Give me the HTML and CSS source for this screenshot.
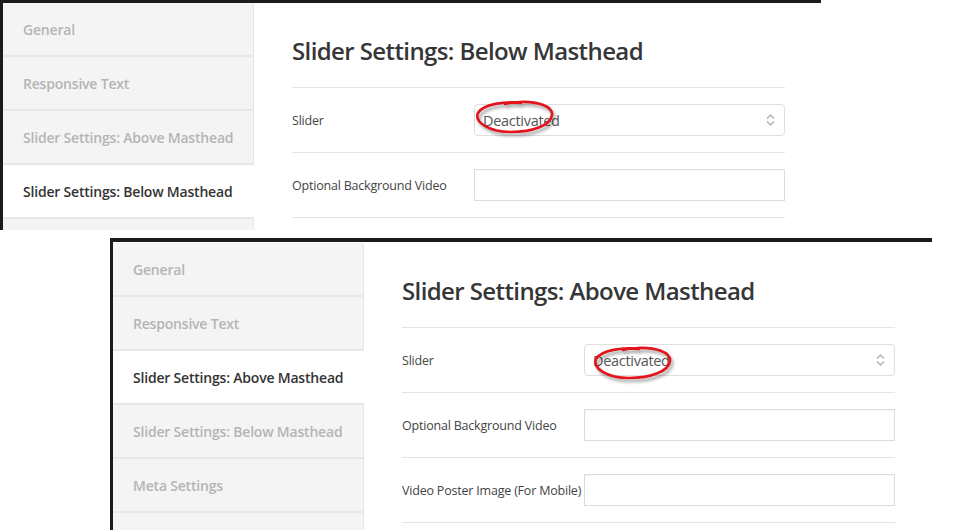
FILE: index.html
```html
<!DOCTYPE html>
<html>
<head>
<meta charset="utf-8">
<link rel="stylesheet" href="styles.css">
</head>
<body>
<div class="shot shot-top">
  <nav class="sidebar">
    <div class="item">General</div>
    <div class="item">Responsive Text</div>
    <div class="item">Slider Settings: Above Masthead</div>
    <div class="item active">Slider Settings: Below Masthead</div>
    <div class="item"></div>
  </nav>
  <main class="main">
    <h2 class="title">Slider Settings: Below Masthead</h2>
    <div class="row">
      <label class="label">Slider</label>
      <div class="select">
        <span class="select-text">Deactivated</span>
        <svg class="arrows" width="9" height="14" viewBox="0 0 9 14"><path d="M1 5.5 L4.5 2 L8 5.5 M1 8.5 L4.5 12 L8 8.5" fill="none" stroke="#b5b5b5" stroke-width="1.5"/></svg>
        <svg class="ring ring-a" width="82" height="38" viewBox="0 0 82 38"><path d="M46 3 C30 1 8 4 3 13 C-1 22 14 32 36 32 C58 32 76 25 77 15 C78 6 62 1 44 2 C38 2 33 3 30 4" fill="none" stroke="#e3141c" stroke-width="2.6" stroke-linecap="round"/></svg>
      </div>
    </div>
    <div class="row">
      <label class="label">Optional Background Video</label>
      <div class="input"></div>
    </div>
  </main>
</div>

<div class="shot shot-bottom">
  <nav class="sidebar">
    <div class="item">General</div>
    <div class="item">Responsive Text</div>
    <div class="item active">Slider Settings: Above Masthead</div>
    <div class="item">Slider Settings: Below Masthead</div>
    <div class="item">Meta Settings</div>
    <div class="item"></div>
  </nav>
  <main class="main">
    <h2 class="title">Slider Settings: Above Masthead</h2>
    <div class="row">
      <label class="label">Slider</label>
      <div class="select">
        <span class="select-text">Deactivated</span>
        <svg class="arrows" width="9" height="14" viewBox="0 0 9 14"><path d="M1 5.5 L4.5 2 L8 5.5 M1 8.5 L4.5 12 L8 8.5" fill="none" stroke="#b5b5b5" stroke-width="1.5"/></svg>
        <svg class="ring ring-b" width="82" height="38" viewBox="0 0 82 38"><path d="M46 3 C30 1 8 4 3 13 C-1 22 14 32 36 32 C58 32 76 25 77 15 C78 6 62 1 44 2 C38 2 33 3 30 4" fill="none" stroke="#e3141c" stroke-width="2.6" stroke-linecap="round"/></svg>
      </div>
    </div>
    <div class="row">
      <label class="label">Optional Background Video</label>
      <div class="input"></div>
    </div>
    <div class="row">
      <label class="label">Video Poster Image (For Mobile)</label>
      <div class="input"></div>
    </div>
  </main>
</div>
</body>
</html>
```
FILE: styles.css
```css
html, body {
  margin: 0;
  padding: 0;
  background: #ffffff;
}
body {
  font-family: "Open Sans", "Noto Sans", sans-serif;
  width: 963px;
  height: 530px;
  overflow: hidden;
}
.shot {
  display: flex;
  align-items: flex-start;
  overflow: hidden;
  background: #ffffff;
  border-top: 3px solid #1b1b1b;
  border-left: 3px solid #1b1b1b;
  box-sizing: border-box;
}
.shot-top {
  width: 821px;
  height: 230px;
}
.shot-bottom {
  width: 822px;
  height: 292px;
  margin-top: 8px;
  margin-left: 110px;
  border-top-width: 4px;
  padding-top: 1px;
}
.sidebar {
  flex: 0 0 250px;
  background: #f4f4f4;
  border-right: 1px solid #e6e6e6;
}
.item {
  height: 52px;
  line-height: 54px;
  padding-left: 20px;
  border-bottom: 2px solid #e8e8e8;
  font-size: 14px;
  font-weight: 600;
  color: #b4b4b4;
  white-space: nowrap;
  letter-spacing: -0.2px;
}
.item.active {
  background: #ffffff;
  color: #333333;
  margin-right: -1px;
}
.main {
  width: 493px;
  margin-left: 38px;
  padding-top: 31px;
}
.title {
  margin: 0;
  font-size: 24px;
  line-height: 34px;
  font-weight: 600;
  color: #363636;
  letter-spacing: -0.6px;
  padding-bottom: 19px;
  border-bottom: 1px solid #e4e4e4;
}
.row {
  display: flex;
  align-items: center;
  padding: 16px 0;
  border-bottom: 1px solid #e4e4e4;
}
.label {
  flex: 0 0 182px;
  font-size: 12.5px;
  color: #444444;
  white-space: nowrap;
  letter-spacing: -0.2px;
}
.select, .input {
  position: relative;
  flex: 0 0 311px;
  height: 32px;
  box-sizing: border-box;
  border: 1px solid #dedede;
  background: #ffffff;
}
.select {
  border-radius: 4px;
  display: flex;
  align-items: center;
  padding-left: 8px;
}
.input {
  border-color: #dcdcdc;
  box-shadow: inset 0 1px 2px rgba(0,0,0,0.04);
}
.select-text {
  font-size: 14.5px;
  color: #555555;
  letter-spacing: -0.3px;
}
.arrows {
  position: absolute;
  right: 9px;
  top: 8px;
}
.ring {
  position: absolute;
  overflow: visible;
  filter: drop-shadow(2px 3px 1.5px rgba(0,0,0,0.35));
}
.ring-a {
  left: 0px;
  top: -5px;
}
.ring-b {
  left: 8px;
  top: 1px;
}
```
